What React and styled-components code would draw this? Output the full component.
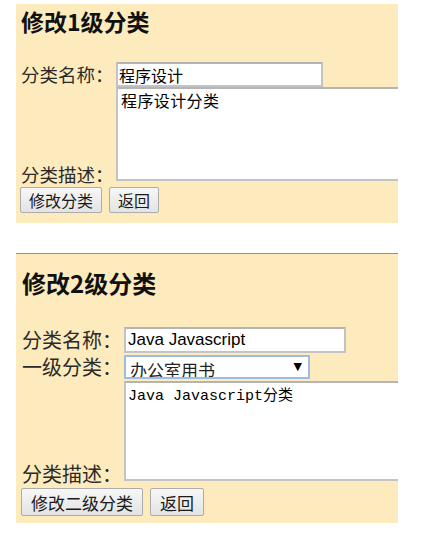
import React from "react";
import styled, { createGlobalStyle } from "styled-components";

const GlobalStyle = createGlobalStyle`
  body {
    margin: 0;
    background: #fff;
    font-family: "Noto Sans CJK SC", "Liberation Sans", sans-serif;
  }
`;

const Page = styled.div`
  padding: 4px 0 20px 16px;
  display: flex;
  flex-direction: column;
  gap: 30px;
`;

const Panel = styled.section`
  width: 382px;
  box-sizing: border-box;
  background: #fdebbd;
  overflow: hidden;
  padding: ${(p) => p.$pad};
  border-top: ${(p) => (p.$line ? "1px solid #8f8f8f" : "none")};
`;

const Title = styled.h2`
  margin: 0 0 ${(p) => p.$gap}px 1px;
  font-size: ${(p) => p.$size}px;
  line-height: ${(p) => p.$size + 5}px;
  font-weight: 700;
  color: #111;
`;

const Row = styled.div`
  display: flex;
  align-items: ${(p) => (p.$bottom ? "flex-end" : "center")};
  margin-bottom: ${(p) => p.$gap || 0}px;
`;

const Label = styled.label`
  flex: none;
  width: ${(p) => p.$w}px;
  padding-left: 1px;
  box-sizing: border-box;
  font-size: ${(p) => p.$size}px;
  line-height: ${(p) => (p.$bottom ? `${p.$size}px` : "1")};
  margin-bottom: ${(p) => p.$drop || 0}px;
  color: #2a2a2a;
  white-space: nowrap;
  overflow: visible;
`;

const TextInput = styled.input`
  width: ${(p) => p.$w}px;
  height: ${(p) => p.$h}px;
  box-sizing: border-box;
  margin: 0;
  padding: 0 0 0 ${(p) => p.$indent || 1}px;
  border: 2px solid #c3c3c3;
  border-top-color: #b4b4b4;
  background: #fff;
  font-family: "Liberation Sans", "Noto Sans CJK SC", sans-serif;
  font-size: ${(p) => p.$size}px;
  color: #000;
  outline: none;
`;

const SelectBox = styled.div`
  position: relative;
  width: ${(p) => p.$w}px;
  height: ${(p) => p.$h}px;
`;

const Select = styled.select`
  appearance: none;
  width: 100%;
  height: 100%;
  box-sizing: border-box;
  margin: 0;
  padding: 0 0 0 4px;
  border: 2px solid #9dbce3;
  border-radius: 1px;
  background: #fff;
  font-family: "Noto Sans CJK SC", sans-serif;
  font-size: ${(p) => p.$size}px;
  color: #222;
  outline: none;
`;

const Arrow = styled.span`
  position: absolute;
  right: 8px;
  top: 50%;
  transform: translateY(-52%);
  font-size: 11px;
  line-height: 1;
  color: #000;
  pointer-events: none;
  font-family: "DejaVu Sans", sans-serif;
`;

const TextArea = styled.textarea`
  flex: none;
  width: 320px;
  height: ${(p) => p.$h}px;
  box-sizing: border-box;
  margin: 0;
  padding: ${(p) => p.$pad};
  border: 2px solid #c3c3c3;
  border-top-color: #b4b4b4;
  background: #fff;
  resize: none;
  font-family: ${(p) =>
    p.$mono
      ? `"Liberation Mono", "Noto Sans CJK SC", monospace`
      : `"Noto Sans CJK SC", sans-serif`};
  font-size: ${(p) => p.$size}px;
  line-height: ${(p) => p.$size + 4}px;
  letter-spacing: ${(p) => (p.$mono ? 0 : 0.4)}px;
  color: #000;
  outline: none;
`;

const Buttons = styled.div`
  display: flex;
  gap: 7px;
  margin-top: ${(p) => p.$top}px;
`;

const Button = styled.button`
  height: ${(p) => p.$h}px;
  margin: 0;
  padding: 0 ${(p) => p.$px}px;
  border: 1px solid #acacac;
  border-radius: 2px;
  background: linear-gradient(#f7f7f7, #e3e3e3);
  font-family: "Noto Sans CJK SC", sans-serif;
  font-size: ${(p) => p.$size}px;
  line-height: 1;
  color: #1a1a1a;
  cursor: pointer;
`;

export default function App() {
  return (
    <>
      <GlobalStyle />
      <Page>
        <Panel $pad="3px 0 10px 4px">
          <Title $size={23} $gap={27}>
            修改1级分类
          </Title>
          <Row>
            <Label $w={96} $size={18.5}>
              分类名称：
            </Label>
            <TextInput $w={207} $h={25} $size={16} defaultValue="程序设计" />
          </Row>
          <Row $bottom>
            <Label $w={96} $size={18.5} $bottom $drop={-2}>
              分类描述：
            </Label>
            <TextArea
              $h={94}
              $size={16}
              $pad="1px 3px"
              defaultValue="程序设计分类"
            />
          </Row>
          <Buttons $top={6}>
            <Button $h={26} $px={8} $size={16}>
              修改分类
            </Button>
            <Button $h={26} $px={8} $size={16}>
              返回
            </Button>
          </Buttons>
        </Panel>

        <Panel $line $pad="14px 0 7px 5px">
          <Title $size={24} $gap={30}>
            修改2级分类
          </Title>
          <Row $gap={2}>
            <Label $w={103} $size={20}>
              分类名称：
            </Label>
            <TextInput
              $w={222}
              $h={26}
              $size={17}
              $indent={2}
              defaultValue="Java Javascript"
            />
          </Row>
          <Row $gap={2}>
            <Label $w={103} $size={20}>
              一级分类：
            </Label>
            <SelectBox $w={186} $h={24}>
              <Select $size={17} defaultValue="办公室用书">
                <option>办公室用书</option>
                <option>程序设计</option>
              </Select>
              <Arrow>▼</Arrow>
            </SelectBox>
          </Row>
          <Row $bottom>
            <Label $w={103} $size={20} $bottom $drop={-3}>
              分类描述：
            </Label>
            <TextArea
              $h={100}
              $size={15}
              $mono
              $pad="4px 2px"
              defaultValue="Java Javascript分类"
            />
          </Row>
          <Buttons $top={7}>
            <Button $h={28} $px={9} $size={17}>
              修改二级分类
            </Button>
            <Button $h={28} $px={9} $size={17}>
              返回
            </Button>
          </Buttons>
        </Panel>
      </Page>
    </>
  );
}
